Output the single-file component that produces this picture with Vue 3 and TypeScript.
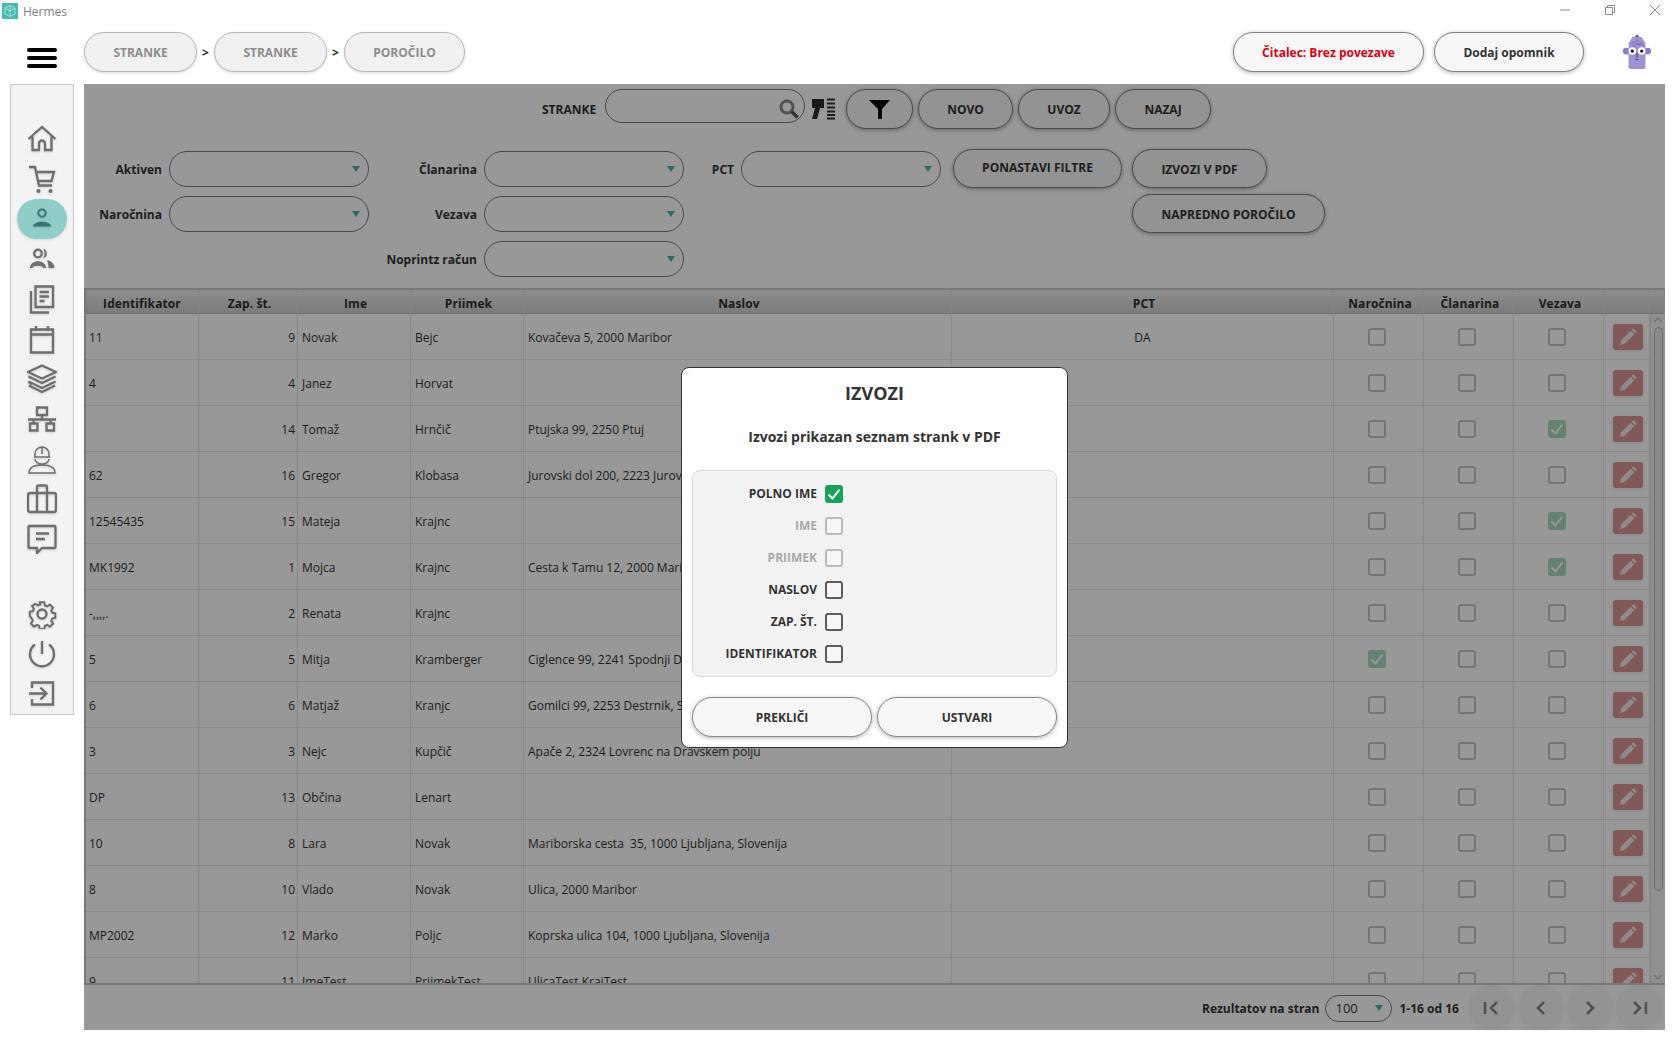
<script setup lang="ts">
interface Row {
  id: string
  no: number
  first: string
  last: string
  addr: string
  pct: string
  sub: boolean
  mem: boolean
  tie: boolean
}

const r = (
  id: string,
  no: number,
  first: string,
  last: string,
  addr = '',
  pct = '',
  sub = false,
  mem = false,
  tie = false,
): Row => ({ id, no, first, last, addr, pct, sub, mem, tie })

const rows: Row[] = [
  r('11', 9, 'Novak', 'Bejc', 'Kovačeva 5, 2000 Maribor', 'DA'),
  r('4', 4, 'Janez', 'Horvat'),
  r('', 14, 'Tomaž', 'Hrnčič', 'Ptujska 99, 2250 Ptuj', '', false, false, true),
  r('62', 16, 'Gregor', 'Klobasa', 'Jurovski dol 200, 2223 Jurovski Dol'),
  r('12545435', 15, 'Mateja', 'Krajnc', '', '', false, false, true),
  r('MK1992', 1, 'Mojca', 'Krajnc', 'Cesta k Tamu 12, 2000 Maribor', '', false, false, true),
  r('-,,,,.', 2, 'Renata', 'Krajnc'),
  r('5', 5, 'Mitja', 'Kramberger', 'Ciglence 99, 2241 Spodnji Duplek', '', true),
  r('6', 6, 'Matjaž', 'Kranjc', 'Gomilci 99, 2253 Destrnik, Slovenija'),
  r('3', 3, 'Nejc', 'Kupčič', 'Apače 2, 2324 Lovrenc na Dravskem polju'),
  r('DP', 13, 'Občina', 'Lenart'),
  r('10', 8, 'Lara', 'Novak', 'Mariborska cesta  35, 1000 Ljubljana, Slovenija'),
  r('8', 10, 'Vlado', 'Novak', 'Ulica, 2000 Maribor'),
  r('MP2002', 12, 'Marko', 'Poljc', 'Koprska ulica 104, 1000 Ljubljana, Slovenija'),
  r('9', 11, 'ImeTest', 'PriimekTest', 'UlicaTest KrajTest'),
]

const headers = ['Identifikator', 'Zap. št.', 'Ime', 'Priimek', 'Naslov', 'PCT', 'Naročnina', 'Članarina', 'Vezava', '', '']

const options = [
  { label: 'POLNO IME', state: 'on' },
  { label: 'IME', state: 'off' },
  { label: 'PRIIMEK', state: 'off' },
  { label: 'NASLOV', state: '' },
  { label: 'ZAP. ŠT.', state: '' },
  { label: 'IDENTIFIKATOR', state: '' },
]
</script>

<template>
  <div class="app">
    <header class="titlebar">
      <svg class="logo" viewBox="0 0 16 16">
        <rect width="16" height="16" fill="#45bcb0" />
        <path d="M8 2.5 13 5v6l-5 2.5L3 11V5zM8 2.5V13.5M3 5l5 3 5-3" fill="none" stroke="#bfe9e4" stroke-width=".8" />
      </svg>
      <span class="apptitle">Hermes</span>
      <div class="winctl">
        <svg viewBox="0 0 10 10"><path d="M0 5H10" stroke="#8a8a8a" fill="none" /></svg>
        <svg viewBox="0 0 10 10"><path d="M.5 2.5h7v7h-7zM2.5 2.5V.5h7v7h-2" stroke="#8a8a8a" fill="none" /></svg>
        <svg viewBox="0 0 10 10"><path d="M0 0 10 10M10 0 0 10" stroke="#8a8a8a" fill="none" /></svg>
      </div>
    </header>

    <div class="topbar">
      <div class="burger"><i /><i /><i /></div>
      <nav class="crumbs">
        <span class="crumb w113">STRANKE</span>
        <b class="sep">&gt;</b>
        <span class="crumb w113">STRANKE</span>
        <b class="sep">&gt;</b>
        <span class="crumb w121">POROČILO</span>
      </nav>
      <div class="topright">
        <button class="tbtn reader">Čitalec: Brez povezave</button>
        <button class="tbtn note">Dodaj opomnik</button>
        <svg class="avatar" viewBox="0 0 32 40">
          <path d="M13 5 16 1l3 4z" fill="#5a4b9c" />
          <circle cx="4.5" cy="19" r="3.6" fill="#8d7cc8" />
          <circle cx="27.5" cy="19" r="3.6" fill="#8d7cc8" />
          <path d="M7 11 11 4h10l4 7v25q0 2-2 2H9q-2 0-2-2z" fill="#a091d4" />
          <path d="M10 11 18 7M11 14 22 10M15 11 23 13" stroke="#7c6bb8" stroke-width=".8" fill="none" />
          <circle cx="11" cy="19" r="4" fill="#fff" />
          <circle cx="21" cy="19" r="4" fill="#fff" />
          <circle cx="11" cy="19" r="1.7" fill="#111" />
          <circle cx="21" cy="19" r="1.7" fill="#111" />
          <path d="M16 21v5M14.5 28h3" stroke="#222" stroke-width=".8" fill="none" />
        </svg>
      </div>
    </div>

    <div class="body">
      <aside class="side">
        <div class="nav-top">
          <svg class="ic" viewBox="0 0 30 30"><path d="M1.5 15 15 3l13.5 12M5.500 12.500V26H12V19.500a3 3 0 0 1 6 0V26h6.500V12.500" /></svg>
          <svg class="ic" viewBox="0 0 30 30"><path d="M2 3h6l4 18.500h13M9 8h18l-2.500 9H11" /><circle class="fill" cx="11.500" cy="27" r="2" /><circle class="fill" cx="23.500" cy="27" r="2" /></svg>
          <div class="active-pill">
            <svg class="ic person" viewBox="0 0 30 30"><circle cx="15" cy="9" r="3.700" /><path class="teal" d="M6 22.500c0-6.500 18-6.500 18 0z" /></svg>
          </div>
          <svg class="ic" viewBox="0 0 30 30"><circle cx="11" cy="9.500" r="3.800" /><path class="fill" d="M3 24c0-9 16-9 16 0h-2.500c-1-3-11-3-11 0z" /><path class="fill" d="M16 4.500a5.200 5.200 0 0 1 0 10c2-2.500 2-7.500 0-10z" /><path class="fill" d="M20 16c4.500 1 7.500 4 7.500 8h-6c0-3-.5-6-1.500-8z" /></svg>
          <svg class="ic" viewBox="0 0 30 30"><path d="M8.500 2.500h17.500v20.500H8.500zM12.500 8h9.500M12.500 12.500h9.500M12.500 17h5" /><path d="M4 7v21.500h18" /></svg>
          <svg class="ic" viewBox="0 0 30 30"><path d="M4 5.500h22v23H4zM4 10.500h22M9 2v5M21 2v5" /></svg>
          <svg class="ic" viewBox="0 0 30 30"><path d="M15 1.500 29 8 15 14.500 1 8zM1.500 12.500 15 19l13.500-6.500M1.500 17.500 15 24l13.500-6.500M1.500 17.500l3 3M2 21.500 15 28l13-6.500" /></svg>
          <svg class="ic" viewBox="0 0 30 30"><path d="M10 3.500h10v7.500H10zM15 11v4.500M1 15.500h28M6.500 15.500v4M23.500 15.500v4M3 19.500h7.500v7H3zM19.500 19.500H27v7h-7.500z" /></svg>
          <svg class="ic thin" viewBox="0 0 30 30"><path d="M8 13V10a7 7 0 0 1 14 0v3M7 13h16M15 3v7M8 15a7 5 0 0 0 14 0M2 29c0-7 7-8 13-8s13 1 13 8z" /></svg>
          <svg class="ic" viewBox="0 0 30 30"><rect x="1" y="9" width="28" height="19" rx="2" /><path d="M10 9V3q0-1.500 1.500-1.500h7Q20 1.500 20 3v6M10 9v19M20 9v19" /></svg>
          <svg class="ic" viewBox="0 0 30 30"><path d="M2.500 2h25q1 0 1 1v20q0 1-1 1H15l-5 5v-5H2.500q-1 0-1-1V3q0-1 1-1zM9 9.500h13M9 15h9" /></svg>
        </div>
        <div class="nav-bottom">
          <svg class="ic" viewBox="0 0 30 30"><path d="M12.500 2h5l.8 3.500 2.500 1 3-2 3.500 3.500-2 3 1 2.500 3.500.8v5l-3.500.8-1 2.500 2 3-3.500 3.500-3-2-2.500 1-.8 3.500h-5l-.8-3.500-2.500-1-3 2-3.500-3.500 2-3-1-2.500L1.500 17.500v-5l3.500-.8 1-2.500-2-3L7.500 3.500l3 2 2.500-1z" transform="translate(1.500 1.500) scale(.9)" /><circle cx="15" cy="15" r="4.500" /></svg>
          <svg class="ic" viewBox="0 0 30 30"><path d="M15 2v13M8 5.500a12 12 0 1 0 14 0" /></svg>
          <svg class="ic" viewBox="0 0 30 30"><path d="M5 9V3.500h21v22H5V20M2 14.500h17M13.500 8.500l6 6-6 6" /></svg>
        </div>
      </aside>

      <main class="panel">
        <div class="search-row">
          <span class="lbl upper">STRANKE</span>
          <div class="search"><svg class="glass" viewBox="0 0 20 20"><circle cx="8" cy="8" r="6" /><path class="handle" d="M12.500 12.500 18.500 18.500" /></svg></div>
          <svg class="scanner" viewBox="0 0 26 22">
            <path d="M2 1h12v9h-4L7 21H2l3-11H2z" fill="#2b2b2b" />
            <path d="M17 1.500h8M17 5.500h8M17 9.500h8M17 13.500h8M17 17h8M17 20.500h8" stroke="#333" stroke-width="1.800" fill="none" />
          </svg>
          <button class="pill w67"><svg class="funnel" viewBox="0 0 21 19"><path d="M0 0h21l-8 9v10h-4V9z" /></svg></button>
          <button class="pill w95">NOVO</button>
          <button class="pill w92">UVOZ</button>
          <button class="pill w96">NAZAJ</button>
        </div>

        <div class="filters">
          <label class="f-label">Aktiven</label><div class="sel" />
          <label class="f-label">Članarina</label><div class="sel" />
          <label class="f-label">PCT</label><div class="sel" />
          <button class="pill fb1">PONASTAVI FILTRE</button>
          <button class="pill fb2">IZVOZI V PDF</button>
          <label class="f-label">Naročnina</label><div class="sel" />
          <label class="f-label">Vezava</label><div class="sel" />
          <span class="skip" />
          <button class="pill fb3">NAPREDNO POROČILO</button>
          <label class="f-label">&nbsp;</label><span />
          <label class="f-label">Noprintz račun</label><div class="sel" />
        </div>

        <section class="table">
          <div class="thead">
            <div v-for="(h, i) in headers" :key="i" class="th">{{ h }}</div>
          </div>
          <div class="tbody">
            <div class="rows">
              <div v-for="row in rows" :key="row.no" class="tr">
                <div class="td">{{ row.id }}</div>
                <div class="td right">{{ row.no }}</div>
                <div class="td">{{ row.first }}</div>
                <div class="td">{{ row.last }}</div>
                <div class="td addr">{{ row.addr }}</div>
                <div class="td center">{{ row.pct }}</div>
                <div v-for="(flag, k) in [row.sub, row.mem, row.tie]" :key="k" class="td center chk-cell">
                  <span class="chk dim" :class="{ on: flag }">
                    <svg v-if="flag" viewBox="0 0 18 18"><path d="M3.500 9.500 7.500 13.500 14.500 4.500" /></svg>
                  </span>
                </div>
                <div class="td edit-cell">
                  <span class="edit">
                    <svg viewBox="0 0 20 20"><path d="M1 19l1.500-5.500L13 3l4 4L6.500 17.500zM14 2l1-1q1-1 2 0l2 2q1 1 0 2l-1 1z" /></svg>
                  </span>
                </div>
              </div>
            </div>
            <div class="vbar">
              <svg class="arrow" viewBox="0 0 10 6"><path d="M1 5 5 1l4 4" /></svg>
              <div class="thumb" />
              <svg class="arrow" viewBox="0 0 10 6"><path d="M1 1l4 4 4-4" /></svg>
            </div>
          </div>
        </section>

        <footer class="pager">
          <span class="lbl">Rezultatov na stran</span>
          <div class="sel small"><span>100</span></div>
          <span class="lbl">1-16 od 16</span>
          <div class="navs">
            <span class="nav-btn"><svg viewBox="0 0 20 20"><path d="M3 4v12M15 4l-6 6 6 6" /></svg></span>
            <span class="nav-btn"><svg viewBox="0 0 20 20"><path d="M13 4l-6 6 6 6" /></svg></span>
            <span class="nav-btn"><svg viewBox="0 0 20 20"><path d="M7 4l6 6-6 6" /></svg></span>
            <span class="nav-btn"><svg viewBox="0 0 20 20"><path d="M5 4l6 6-6 6M17 4v12" /></svg></span>
          </div>
        </footer>

        <div class="scrim" />

        <div class="modal">
          <h2>IZVOZI</h2>
          <p>Izvozi prikazan seznam strank v PDF</p>
          <div class="box">
            <div v-for="o in options" :key="o.label" class="opt" :class="{ disabled: o.state === 'off' }">
              <span class="opt-label">{{ o.label }}</span>
              <span class="chk" :class="{ on: o.state === 'on' }">
                <svg v-if="o.state === 'on'" viewBox="0 0 18 18"><path d="M3.500 9.500 7.500 13.500 14.500 4.500" /></svg>
              </span>
            </div>
          </div>
          <div class="modal-actions">
            <button class="mbtn">PREKLIČI</button>
            <button class="mbtn">USTVARI</button>
          </div>
        </div>
      </main>
    </div>
  </div>
</template>

<style>
html, body { margin: 0; background: #fff; }
</style>

<style scoped>
* { box-sizing: border-box; }
.app { width: 1680px; height: 1047px; overflow: hidden; background: #fff; font-family: "Open Sans", "Noto Sans", sans-serif; color: #333; display: flex; flex-direction: column; }
.titlebar { height: 24px; display: flex; align-items: center; padding: 0 20px 2px 2px; }
.logo { width: 16px; height: 16px; }
.apptitle { font-size: 12px; color: #808080; margin-left: 5px; }
.winctl { margin-left: auto; display: flex; gap: 35px; margin-top: -3px; }
.winctl svg { width: 10px; height: 10px; }
.topbar { height: 60px; display: flex; align-items: flex-start; padding-top: 8px; }
.burger { width: 84px; padding: 16px 0 0 27px; display: flex; flex-direction: column; gap: 4px; }
.burger i { display: block; width: 30px; height: 4px; border-radius: 2px; background: #000; }
.crumbs { display: flex; align-items: center; }
.crumb { height: 40px; border-radius: 20px; border: 1px solid #b8b8b8; background: #f1f1f1; color: #8c8c8c; font-weight: 700; font-size: 12px; display: flex; align-items: center; justify-content: center; box-shadow: 0 1px 3px rgba(0,0,0,.15); }
.w113 { width: 113px; }
.w121 { width: 121px; }
.sep { width: 17px; text-align: center; font-size: 12px; color: #222; }
.topright { margin-left: auto; display: flex; align-items: flex-start; padding-right: 28px; }
button { font-family: inherit; cursor: default; }
.tbtn { height: 40px; border-radius: 20px; border: 1px solid #808080; background: #f7f7f7; font-weight: 700; font-size: 12px; box-shadow: 0 1px 4px rgba(0,0,0,.3); padding: 0; }
.reader { width: 191px; color: #e0000e; margin-right: 10px; }
.note { width: 150px; color: #333; margin-right: 38px; }
.avatar { width: 30px; height: 38px; margin-top: 1px; }

.body { flex: 1; display: flex; align-items: flex-start; }
.side { width: 64px; height: 631px; margin: 0 10px; background: #f3f3f3; border: 1px solid #c8c8c8; display: flex; flex-direction: column; align-items: center; padding-top: 39px; }
.nav-top { display: flex; flex-direction: column; align-items: center; gap: 10px; }
.nav-bottom { display: flex; flex-direction: column; align-items: center; gap: 10px; margin-top: 45px; }
.ic { width: 30px; height: 30px; fill: none; stroke: #6e6e6e; stroke-width: 2.300; display: block; filter: drop-shadow(0 1px 1px rgba(0,0,0,.15)); }
.ic .fill { fill: #6e6e6e; stroke: none; }
.ic.thin { stroke-width: 1.500; }
.active-pill { width: 50px; height: 40px; border-radius: 20px; background: #8ecdc8; display: flex; align-items: center; justify-content: center; box-shadow: 0 1px 3px rgba(0,0,0,.12); margin: -5px 0; }
.person { stroke: #3a6f6d; stroke-width: 1.800; }
.person .teal { fill: #3a6f6d; stroke: none; }

.panel { position: relative; width: 1581px; height: 946px; background: #fff; display: flex; flex-direction: column; }
.panel > * { flex-shrink: 0; }
.scrim { position: absolute; inset: 0; background: rgba(0,0,0,.405); }
.search-row { height: 45px; padding: 5px 0 0 458px; display: flex; align-items: flex-start; }
.lbl { font-size: 12px; font-weight: 700; color: #333; white-space: nowrap; }
.upper { line-height: 42px; width: 63px; }
.search { position: relative; width: 200px; height: 34px; border-radius: 17px; border: 1px solid #777; }
.glass { position: absolute; right: 5px; top: 9px; width: 20px; height: 20px; fill: none; stroke: #888; stroke-width: 3; }
.glass .handle { stroke: #555; stroke-width: 3.500; }
.scanner { width: 26px; height: 22px; margin: 9px 10px 0 5px; }
.pill { height: 40px; border-radius: 20px; border: 1px solid #7c7c7c; background: #f6f6f6; font-weight: 700; font-size: 12px; color: #333; box-shadow: 0 1px 4px rgba(0,0,0,.35); padding: 0; margin-right: 5px; display: block; }
.w67 { width: 67px; display: flex; align-items: center; justify-content: center; }
.w95 { width: 95px; }
.w96 { width: 96px; }
.w92 { width: 92px; }
.funnel { width: 21px; height: 19px; fill: #000; }
.filters { margin-top: 22px; height: 135px; display: grid; grid-template-columns: 85px 200px 115px 200px 57px 200px 191px 193px; grid-auto-rows: 45px; align-items: start; }
.f-label { font-size: 12px; font-weight: 700; color: #333; text-align: right; padding-right: 7px; line-height: 38px; white-space: nowrap; justify-self: end; }
.sel { position: relative; height: 36px; width: 200px; border: 1px solid #7a7a7a; border-radius: 18px; }
.sel::after { content: ""; position: absolute; right: 8px; top: 50%; margin-top: -3px; border-left: 4px solid transparent; border-right: 4px solid transparent; border-top: 6px solid #4bb5a8; }
.skip { grid-column: span 2; }
.fb1 { width: 169px; height: 39px; margin: -2px 0 0 12px; padding-bottom: 3px; }
.fb2 { width: 135px; height: 39px; margin: -2px 0 0 0; padding-top: 2px; }
.fb3 { grid-column: 8; width: 193px; height: 39px; margin: -2px 0 0 0; padding-top: 2px; }

.table { margin-top: 2px; height: 697px; border-top: 2px solid #c9c9c9; border-left: 2px solid #c9c9c9; border-bottom: 2px solid #c9c9c9; display: flex; flex-direction: column; overflow: hidden; }
.thead, .tr { display: grid; grid-template-columns: 113px 99px 113px 113px 428px 382px 90px 90px 90px 46px; }
.thead { height: 24px; flex: none; grid-template-columns: 113px 99px 113px 113px 428px 382px 90px 90px 90px 46px 15px; background: linear-gradient(#ededed, #cfcfcf); border-bottom: 1px solid #c0c0c0; }
.th { font-size: 12px; letter-spacing: .1px; font-weight: 700; color: #2e2e2e; text-align: center; line-height: 28px; border-right: 1px solid #dedede; padding-left: 3px; }
.th:first-child { padding-left: 0; }
.tbody { flex: 1; display: flex; min-height: 0; }
.rows { width: 1564px; overflow: hidden; }
.tr { height: 46px; }
.td { font-size: 12px; color: #333; padding: 3px 4px 0; display: flex; align-items: center; line-height: 16px; height: 46px; border-right: 1px solid #e6e6e6; border-bottom: 1px solid #e6e6e6; white-space: pre; overflow: hidden; }
.td:first-child { padding-left: 3px; }
.right { justify-content: flex-end; padding-right: 2px; }
.center { justify-content: center; }
.chk-cell { padding: 0 3px 0 0; }
.edit-cell { padding: 0 0 0 9px; }
.edit { width: 30px; height: 26px; border-radius: 3px; background: #dc9494; display: flex; align-items: center; justify-content: center; box-shadow: 0 1px 3px rgba(0,0,0,.12); }
.edit svg { width: 18px; height: 18px; fill: #f0eaea; }
.chk { width: 18px; height: 18px; border-radius: 3px; border: 2px solid #5c5c5c; background: #f6f6f6; display: block; flex: none; }
.chk.dim { opacity: .4; border-color: #6e6e6e; background: transparent; }
.chk svg { display: block; width: 18px; height: 18px; margin: -2px; fill: none; stroke: #fff; stroke-width: 2; }
.chk.on { background: #17a35a; border-color: #17a35a; }
.chk.dim.on { opacity: .38; background: #17a35a; border-color: #17a35a; }
.vbar { width: 15px; display: flex; flex-direction: column; align-items: center; border-left: 1px solid #dedede; background: #f2f2f2; }
.arrow { width: 10px; height: 6px; fill: none; stroke: #b8b8b8; stroke-width: 1.200; margin-top: 3px; flex: none; }
.thumb { width: 9px; height: 564px; margin: 4px 0 auto; border: 1px solid #b0b0b0; border-radius: 5px; background: #eaeaea; flex: none; }
.vbar .arrow:last-child { margin: 0 0 3px; }
.pager { height: 45px; display: flex; align-items: center; padding: 1px 0 0 1118px; position: relative; }
.sel.small { width: 67px; height: 27px; border-radius: 14px; margin: 0 7px 0 6px; font-size: 13px; color: #333; padding: 3px 9px; line-height: 19px; flex: none; }
.navs { display: flex; gap: 3px; margin-left: 10px; }
.nav-btn { width: 46px; height: 46px; border-radius: 50%; background: rgba(0,0,0,.035); box-shadow: 0 0 4px rgba(0,0,0,.035); display: flex; align-items: center; justify-content: center; flex: none; }
.nav-btn svg { width: 20px; height: 20px; fill: none; stroke: #888; stroke-width: 2.500; }

.modal { position: absolute; left: 597px; top: 283px; width: 387px; height: 381px; background: #fff; border: 1px solid #333; border-radius: 8px; padding: 0 10px; display: flex; flex-direction: column; z-index: 2; }
.modal h2 { margin: 13px 0 0; font-size: 18px; font-weight: 700; color: #333; text-align: center; line-height: 25px; }
.modal p { margin: 21px 0 0; font-size: 14px; font-weight: 700; color: #333; text-align: center; line-height: 19px; }
.box { margin-top: 24px; height: 207px; flex: none; background: #f3f3f3; border: 1px solid #d8d8d8; border-radius: 8px; padding: 7px 0 0 0; }
.opt { height: 32px; display: flex; align-items: center; }
.opt-label { width: 124px; text-align: right; font-size: 12px; font-weight: 700; color: #333; white-space: nowrap; margin-top: -2px; }
.opt .chk { margin-left: 8px; }
.opt.disabled .opt-label { color: #a8a8a8; }
.opt.disabled .chk { border-color: #bbb; }
.modal-actions { margin-top: 20px; display: flex; gap: 5px; }
.mbtn { width: 180px; height: 40px; border-radius: 20px; border: 1px solid #888; background: #f7f7f7; font-weight: 700; font-size: 12px; color: #333; box-shadow: 0 1px 4px rgba(0,0,0,.3); padding: 0; }
</style>
